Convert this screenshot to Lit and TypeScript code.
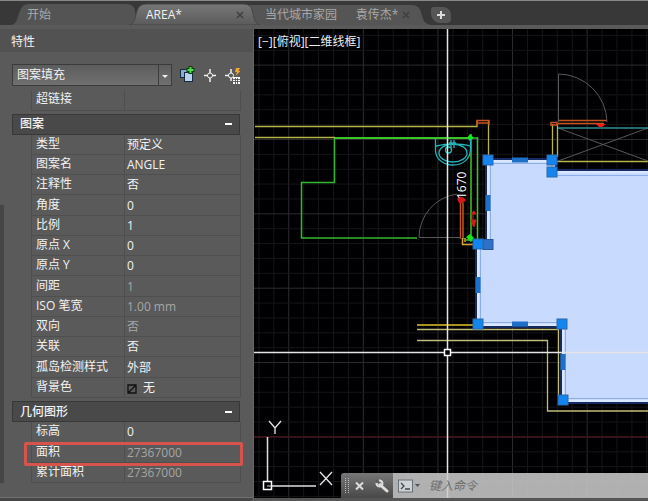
import { LitElement, html, svg, css } from "lit";
import { customElement } from "lit/decorators.js";
import { classMap } from "lit/directives/class-map.js";

interface Row { label: string; value: string; muted?: boolean; swatch?: boolean; marked?: boolean }

const PATTERN: Row[] = [
  { label: "类型", value: "预定义" },
  { label: "图案名", value: "ANGLE" },
  { label: "注释性", value: "否" },
  { label: "角度", value: "0" },
  { label: "比例", value: "1" },
  { label: "原点 X", value: "0" },
  { label: "原点 Y", value: "0" },
  { label: "间距", value: "1", muted: true },
  { label: "ISO 笔宽", value: "1.00 mm", muted: true },
  { label: "双向", value: "否", muted: true },
  { label: "关联", value: "否" },
  { label: "孤岛检测样式", value: "外部" },
  { label: "背景色", value: "无", swatch: true },
];

const GEOMETRY: Row[] = [
  { label: "标高", value: "0" },
  { label: "面积", value: "27367000", muted: true, marked: true },
  { label: "累计面积", value: "27367000", muted: true },
];

@customElement("file-tabs")
class FileTabs extends LitElement {
  static styles = css`
    :host { display: block; }
    .bar {
      display: flex; align-items: flex-end; height: 29px; box-sizing: border-box;
      padding-left: 12px; background: #383838;
      border-top: 1px solid #858a85; border-bottom: 4px solid #5a5a5a;
    }
    .tab { position: relative; display: flex; align-items: center; height: 21px; box-sizing: border-box; }
    .start { width: 122px; padding-left: 15px; }
    .active { width: 121px; padding: 0 10px 0 12px; z-index: 1; }
    .long { width: 170px; padding: 0 14px 0 10px; }
    .shape { position: absolute; inset: 0; width: 100%; height: 100%; overflow: visible; }
    button {
      position: relative; border: 0; padding: 0; background: none; color: #a8a8a8;
      font: 12px/20px "Open Sans", "Noto Sans CJK SC", sans-serif; white-space: pre;
    }
    .active .name { color: #f0f0f0; }
    .close { margin-left: auto; width: 10px; height: 20px; display: flex; align-items: center; justify-content: center; }
    .add { margin: 0 0 2px 6px; width: 20px; height: 16px; border-radius: 3px 8px 4px 9px; background: #565656;
      display: flex; align-items: center; justify-content: center; }
  `;
  private cross() {
    return svg`<path d="M1 1L7 7M7 1L1 7" stroke="#404040" stroke-width="1.600"/>`;
  }
  render() {
    return html`<nav class="bar">
      <div class="tab start">
        <svg class="shape" viewBox="0 0 122 21" preserveAspectRatio="none">
          <path d="M-2 21C5 21 5 14 8 7Q10 0 17 0H114Q123 0 123 8L126 21Z" fill="#545454"/>
        </svg>
        <button class="name">开始</button>
      </div>
      <div class="tab active">
        <svg class="shape" viewBox="0 0 121 21" preserveAspectRatio="none">
          <defs><linearGradient id="g" x1="0" y1="0" x2="0" y2="1"><stop stop-color="#777"/><stop offset="1" stop-color="#5b5b5b"/></linearGradient></defs>
          <path d="M-5 21C1 20 1 13 3 7Q5 0 12 0H109Q117 0 118 6C120 14 121 20 126 21Z" fill="url(#g)" stroke="#454545"/>
          <path d="M-5 21.5H126" stroke="#5a5a5a"/>
        </svg>
        <button class="name">AREA*</button>
        <button class="close" aria-label="关闭 AREA"><svg width="8" height="8">${this.cross()}</svg></button>
      </div>
      <div class="tab long">
        <svg class="shape" viewBox="0 0 170 21" preserveAspectRatio="none">
          <path d="M-7 1H157Q164 1 166 8C168 17 170 20 176 21H0Z" fill="#555"/>
        </svg>
        <button class="name">当代城市家园      袁传杰*</button>
        <button class="close" aria-label="关闭 当代城市家园"><svg width="8" height="8">${this.cross()}</svg></button>
      </div>
      <button class="add" aria-label="新建"><svg width="8" height="8"><path d="M4 0V8M0 4H8" stroke="#dcdcdc" stroke-width="2"/></svg></button>
    </nav>`;
  }
}

@customElement("property-panel")
class PropertyPanel extends LitElement {
  static styles = css`
    :host {
      display: block; position: relative; box-sizing: border-box; background: #5a5a5a; color: #f2f2f2;
      font: 12px/20px "Open Sans", "Noto Sans CJK SC", sans-serif;
      border-right: 1px solid #666;
    }
    .rail { position: absolute; left: 0; top: 176px; bottom: 18px; width: 4px; background: #454545; }
    .foot { position: absolute; left: 0; right: 0; bottom: 0; height: 3px; background: #484848; border-top: 1px solid #707070; }
    h1 { margin: 0; padding: 3px 0 0 11px; height: 20px; background: #525252; font: inherit; }
    .tools { display: flex; align-items: center; height: 22px; padding: 12px 12px 0 12px; }
    .pick { position: relative; width: 160px; height: 22px; }
    select {
      appearance: none; width: 100%; height: 22px; padding: 0 20px 0 4px; border: 1px solid #3b3b3b; border-radius: 0;
      background: linear-gradient(#5d5d5d, #707070); color: #f2f2f2; font: inherit;
    }
    .arrow { position: absolute; right: 1px; top: 1px; width: 12px; height: 20px; border-left: 1px solid #3b3b3b; pointer-events: none; }
    .icons { display: flex; flex: 1; justify-content: space-between; padding-left: 7px; }
    .icons button { border: 0; padding: 0; background: none; width: 16px; height: 18px; }
    .icons svg { display: block; overflow: visible; }
    table { width: 210px; margin-left: 31px; border-collapse: collapse; table-layout: fixed; }
    .lead { margin-top: 4px; }
    tr { height: 20px; }
    tr:nth-child(4n) { height: 21px; }
    th, td { padding: 0; height: 19px; line-height: 19px; border: 1px solid #4f4f4f; border-width: 0 1px 1px 0; white-space: nowrap; text-align: left; font-weight: 400; }
    th { width: 92px; border-left-width: 1px; line-height: 17px; padding-bottom: 2px; height: 17px; text-indent: 4px; }
    td { text-indent: 2px; }
    .muted { color: #a6a6a6; }
    .swatch { vertical-align: -2px; margin-right: 6px; }
    .marked { position: relative; }
    .marked::after {
      content: ""; position: absolute; inset: -1px -3px -4px -101px; border: 3px solid #d6544c; border-radius: 2px;
    }
    h2 {
      margin: 3px 13px 0 12px; height: 21px; box-sizing: border-box; padding: 0 7px; display: flex; align-items: center;
      justify-content: space-between; background: #494949; border: 1px solid #383838; font-size: 12px; font-weight: 500;
    }
    h2 button { width: 7px; height: 12px; border: 0; padding: 0; background: linear-gradient(#fff, #fff) center / 7px 2px no-repeat; }
  `;
  private rows(list: Row[]) {
    return html`<table><tbody>${list.map((r) => html`
      <tr>
        <th scope="row">${r.label}</th>
        <td class=${classMap({ muted: !!r.muted, marked: !!r.marked })}>${r.swatch ? html`<svg class="swatch" width="10" height="10"><path d="M1 1H9V9H1ZM1 9L9 1" fill="none" stroke="#111" stroke-width="1.300"/></svg>` : ""}${r.value}</td>
      </tr>`)}</tbody></table>`;
  }
  render() {
    return html`
      <h1>特性</h1>
      <div class="tools">
        <div class="pick">
          <select aria-label="对象类型"><option>图案填充</option></select>
          <svg class="arrow" viewBox="0 0 12 20"><path d="M3 10H9L6 13Z" fill="#eee"/></svg>
        </div>
        <div class="icons">
          <button aria-label="切换 PICKADD"><svg width="16" height="18">
            <rect x="1.500" y="3.500" width="8" height="8" fill="#86add2" stroke="#17293c"/>
            <rect x="5.500" y="6.500" width="8" height="9" fill="#b5d3ee" stroke="#17293c"/>
            <path d="M11.500 0V8M7.500 4H15.500" stroke="#0b400b" stroke-width="4"/>
            <path d="M11.500 1V7M8.500 4H14.500" stroke="#49e04b" stroke-width="2"/></svg></button>
          <button aria-label="选择对象"><svg width="16" height="18" fill="none" stroke="#f2f2f2">
            <path d="M8 3V7M8 12V16M2 9.500H6M10 9.500H14" stroke-width="1.500"/><circle cx="8" cy="9.500" r="2.500"/></svg></button>
          <button aria-label="快速选择"><svg width="16" height="18" fill="none" stroke="#f2f2f2">
            <path d="M6 3V7M6 12V15M0 9.500H4" stroke-width="1.500"/><circle cx="6" cy="9.500" r="2.500"/>
            <path d="M11 2H15L13.500 5H15.500L10.500 10L12 6H10Z" fill="#f5a52c" stroke="none"/>
            <rect x="8" y="11" width="7" height="7" fill="#fff" stroke="none"/>
            <path d="M8 13.500H15M8 15.500H15M10.500 12V18M12.500 12V18" stroke="#444" stroke-width=".8"/></svg></button>
        </div>
      </div>
      <div class="lead"><table><tbody><tr><th scope="row">超链接</th><td></td></tr></tbody></table></div>
      <h2>图案<button aria-label="折叠图案"></button></h2>
      ${this.rows(PATTERN)}
      <h2>几何图形<button aria-label="折叠几何图形"></button></h2>
      ${this.rows(GEOMETRY)}
      <div class="rail"></div><div class="foot"></div>`;
  }
}

const VERTICALS = Array.from({ length: 120 }, (_, i) => ({ at: 258.9 + i * 14.92, major: i % 5 === 2 }));
const HORIZONTALS = Array.from({ length: 90 }, (_, i) => ({ at: 35.4 + i * 14.87, major: i % 5 === 2 }));
const GRIPS = [[488, 160], [552, 160], [552, 172], [478, 244], [478, 324], [562, 324], [563, 400]];
const MIDS = [[520, 160, 16, 5], [488, 203, 5, 16], [478, 285, 5, 16], [520, 324, 16, 5], [563, 362, 5, 16]];

@customElement("drawing-view")
class DrawingView extends LitElement {
  static styles = css`
    :host { display: flex; flex-direction: column; position: relative; overflow: hidden; background: #000002; border-bottom: 3px solid #555; }
    .scene { position: absolute; inset: 0; width: 100%; height: 100%; }
    .views { position: relative; display: flex; padding: 3px 0 0 4px; }
    .views button { border: 0; padding: 0; background: none; color: #eee; font: 12px/20px "Open Sans", "Noto Sans CJK SC", sans-serif; }
    .label { font: 12px "Open Sans", sans-serif; fill: #fff; }
    .command { position: relative; display: flex; margin: auto 0 0 87px; height: 25px; border-radius: 3px 0 0 0; overflow: hidden; }
    .grip { display: flex; align-items: center; width: 52px; background: linear-gradient(#777, #484848); }
    .grip button, .recent { border: 0; padding: 0; background: none; display: flex; }
    .grip .x { margin: 0 11px 0 4px; }
    .line { display: flex; flex: 1; align-items: center; padding-left: 5px; background: rgb(205 205 205 / 86%); }
    input { flex: 1; min-width: 0; margin-left: 7px; border: 0; padding: 0; background: none; outline: 0; font: italic 12px/20px "Open Sans", "Noto Sans CJK SC", sans-serif; color: #222; }
    input::placeholder { color: #6c6c6c; opacity: 1; }
  `;
  render() {
    return html`
      <svg class="scene" fill="none">
        <g transform="translate(-254 -29)">
          ${VERTICALS.map((l) => svg`<path d="M${l.at} 29V1400" stroke=${l.major ? "#2c2c30" : "#151518"}/>`)}
          ${HORIZONTALS.map((l) => svg`<path d="M254 ${l.at}H2000" stroke=${l.major ? "#2c2c30" : "#151518"}/>`)}
          <path d="M254 437H2000" stroke="#54151c"/>

          <g stroke="#b8b548" stroke-width="1.300">
            <path d="M255 126.500H477V121M255 137.500H335M488.500 121V157M552.500 124V157M557.500 124V157M557 161.500H2000"/>
            <path d="M417 329.500H558.500V396M417 340.500H547.500V411H2000" stroke="#c0bc7a"/>
            <path d="M417 325H474" stroke="#a8941c" stroke-width="2"/>
          </g>
          <g stroke="#c65320" stroke-width="1.500">
            <path d="M477 125V120.500H489V125M477 123H488M551 126V122.500H557V125H551M558 120.500H607M558 123.500H604"/>
            <path d="M460.500 203V239M463 203V239"/>
          </g>
          <path d="M462.500 238V244.500H475M465 238V242" stroke="#d8a52e" stroke-width="1.500"/>
          <path d="M335 138H478M334.500 138V182.500H301.500V238H417" stroke="#32b92e" stroke-width="1.500"/>
          <path d="M335 138H470" stroke="#39c528" stroke-width="2"/>
          <path d="M471 134V240M477.500 137V240H466" stroke="#42c524" stroke-width="1.500"/>
          <path d="M467 138L470 134L474 138L470 141ZM466 237L470 234L474 238L471 242Z" fill="#13e818"/>
          <path d="M457 199Q461 194 466 200L463 203H459Z" fill="#d41a16"/>
          <path d="M471 214H476L474 211ZM471 220H476L474 227ZM473 212V226" fill="#d41a16" stroke="#d41a16"/>
          <path d="M596 124H606L602 127H599Z" fill="#f21b16"/>
          <g stroke="#58585b">
            <path d="M558.500 122V74A49 49 0 0 1 607 122"/>
            <path d="M461 237.500H419A44 44 0 0 1 457 194"/>
            <path d="M558 128L648 161M558 161L648 128"/>
          </g>
          <path d="M558 128H2000" stroke="#2b8d91" stroke-width="1.500"/>
          <g stroke="#24b4bb" stroke-width="1.300">
            <path d="M435.500 139V151C436 161 446 165 453 165C463 165 470 159 470.500 150V139M436 146C441 145 447 144 451 144S464 144 470 146"/>
            <ellipse cx="453" cy="153" rx="14" ry="9"/><circle cx="448.500" cy="150" r="3"/>
            <path d="M451 140V148M454 140V148M449 143H456"/>
          </g>

          <path d="M488 161H554V172H2000V401H563V325H478V245H488Z" fill="#c8dafe" stroke="#142a60" stroke-width="6"/>
          <path d="M488 161H554V172H2000V401H563V325H478V245H488Z" fill="#c8dafe" stroke="#dce8ff" stroke-width="2"/>
          <path d="M490.500 163.500H552V175.500H2000V398.500H565.500V322.500H480.500V247.500H490.500Z" stroke="#8eafe6"/>
          ${MIDS.map(([x, y, w, h]) => svg`<rect x=${x - w / 2} y=${y - h / 2} width=${w} height=${h} fill="#1e6fca"/>`)}
          <rect x="483" y="239.500" width="10" height="10" fill="#2e71c6" stroke="#28589a"/>
          ${GRIPS.map(([x, y]) => svg`<rect x=${x - 5} y=${y - 5} width="10" height="10" fill="#1484ee" stroke="#2869ae"/>`)}
          <text class="label" transform="translate(465.500 199) rotate(-90)">1670</text>

          <path d="M447.500 29V1400M254 352.500H444M451 352.500H2000" stroke="#e4e4e4" stroke-width="1.500"/>
          <rect x="444.500" y="349.500" width="6" height="6" fill="#000" stroke="#fff" stroke-width="1.500"/>
          <path d="M267.500 437V481M272 486H316" stroke="#ddd" stroke-width="1.500"/>
          <rect x="263.500" y="481.500" width="8" height="8" stroke="#fff" stroke-width="1.500"/>
          <path d="M267 486H271" stroke="#ddd"/>
          <path d="M320 472L332 485M332 472L320 485M269 421L275 428L281 421M275 428V434" stroke="#e6e6e6" stroke-width="1.300"/>
        </g>
      </svg>
      <div class="views"><button>[−]</button><button>[俯视]</button><button>[二维线框]</button></div>
      <div class="command">
        <div class="grip">
          <svg width="10" height="18"><path d="M4.500 1V17M7.500 1V17" stroke="#bbb" stroke-dasharray="1 1"/></svg>
          <button class="x" aria-label="关闭"><svg width="9" height="10"><path d="M1 1.500L8 8.500M8 1.500L1 8.500" stroke="#ddd" stroke-width="2"/></svg></button>
          <button aria-label="自定义"><svg width="14" height="14" viewBox="0 0 14 14"><path d="M3.500 4L7 7.500L12 12" fill="none" stroke="#ddd" stroke-width="3" stroke-linecap="round"/><path d="M4 1.500A3 3 0 1 1 1.500 4" fill="none" stroke="#ddd" stroke-width="2"/><path d="M1 1L4.500 4.500" stroke="#5c5c5c" stroke-width="2"/></svg></button>
        </div>
        <div class="line">
          <button class="recent" aria-label="最近使用的命令"><svg width="24" height="14"><rect x=".5" y="1" width="14" height="12" fill="#cfd3d6" stroke="#667078"/><path d="M3 4L6 7L3 10M7 10H12" fill="none" stroke="#3f474d" stroke-width="1.300"/><path d="M17 5H22L19.500 8Z" fill="#555"/></svg></button>
          <input aria-label="命令" placeholder="键入命令">
        </div>
      </div>`;
  }
}

@customElement("app-root")
class AppRoot extends LitElement {
  static styles = css`
    :host { display: flex; flex-direction: column; min-height: 100vh; background: #5a5a5a; }
    .work { display: grid; grid-template-columns: 254px minmax(0, 1fr); flex: 1; }
  `;
  render() {
    return html`<file-tabs></file-tabs>
      <main class="work"><property-panel></property-panel><drawing-view></drawing-view></main>`;
  }
}
